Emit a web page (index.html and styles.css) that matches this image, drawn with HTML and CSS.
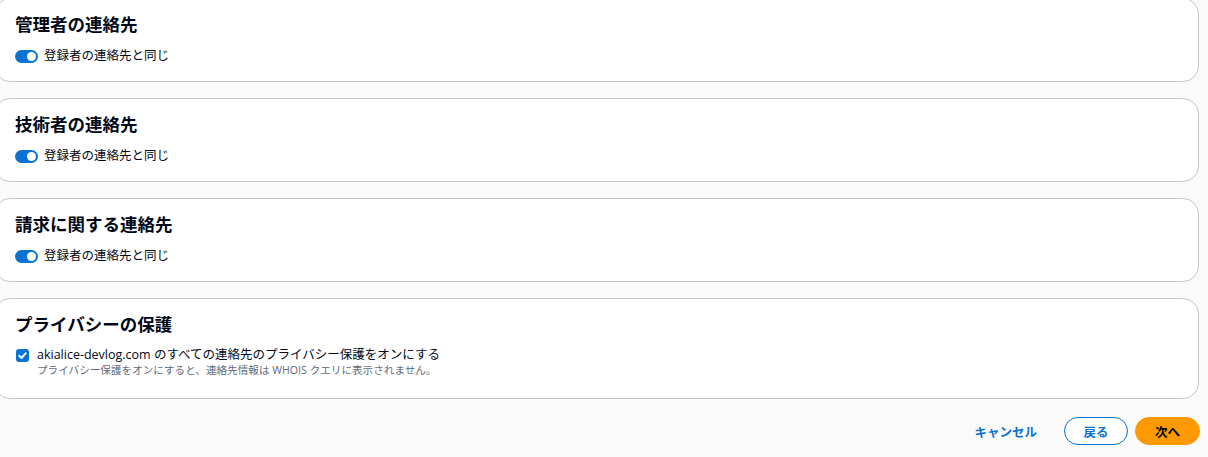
FILE: index.html
```html
<!DOCTYPE html>
<html lang="ja">
<head>
    <meta charset="UTF-8">
    <meta name="viewport" content="width=device-width, initial-scale=1.0">
    <title>連絡先</title>
    <link rel="stylesheet" href="styles.css">
</head>
<body>
    <div class="page">
        <div class="card">
            <h2 class="card-title">管理者の連絡先</h2>
            <label class="toggle-row">
                <span class="toggle"><span class="knob"></span></span>
                <span class="toggle-label">登録者の連絡先と同じ</span>
            </label>
        </div>

        <div class="card">
            <h2 class="card-title">技術者の連絡先</h2>
            <label class="toggle-row">
                <span class="toggle"><span class="knob"></span></span>
                <span class="toggle-label">登録者の連絡先と同じ</span>
            </label>
        </div>

        <div class="card">
            <h2 class="card-title">請求に関する連絡先</h2>
            <label class="toggle-row">
                <span class="toggle"><span class="knob"></span></span>
                <span class="toggle-label">登録者の連絡先と同じ</span>
            </label>
        </div>

        <div class="card card-privacy">
            <h2 class="card-title">プライバシーの保護</h2>
            <label class="check-row">
                <span class="checkbox">
                    <svg width="13" height="13" viewBox="0 0 13 13">
                        <path d="M3.2 6.8 L5.5 9 L9.8 4.2" fill="none" stroke="#fff" stroke-width="1.9" stroke-linecap="round" stroke-linejoin="round"/>
                    </svg>
                </span>
                <span class="check-text">
                    <span class="check-label">akialice-devlog.com のすべての連絡先のプライバシー保護をオンにする</span>
                    <span class="check-desc">プライバシー保護をオンにすると、連絡先情報は WHOIS クエリに表示されません。</span>
                </span>
            </label>
        </div>

        <div class="actions">
            <button class="link-button">キャンセル</button>
            <button class="normal-button">戻る</button>
            <button class="primary-button">次へ</button>
        </div>
    </div>
</body>
</html>
```

FILE: styles.css
```css
* {
    margin: 0;
    padding: 0;
    box-sizing: border-box;
}

body {
    font-family: "Open Sans", "Noto Sans CJK JP", sans-serif;
    background-color: #fafafa;
    color: #000716;
    overflow: hidden;
}

.page {
    margin: -2px 9px 0 -6px;
    display: flex;
    flex-direction: column;
    gap: 16px;
}

.card {
    background-color: #ffffff;
    border: 1px solid #c6c6cd;
    border-radius: 16px;
    padding: 14px 20px 16px;
}

.card-privacy {
    padding-bottom: 21px;
}

.card-title {
    font-size: 17.5px;
    font-weight: 700;
    line-height: 22px;
    margin-bottom: 12px;
}

.toggle-row {
    display: flex;
    align-items: center;
    gap: 6px;
    height: 18px;
}

.toggle {
    width: 23px;
    height: 13px;
    border-radius: 7px;
    background-color: #0972d3;
    display: flex;
    align-items: center;
    justify-content: flex-end;
    padding: 0 2px;
}

.knob {
    width: 9px;
    height: 9px;
    border-radius: 50%;
    background-color: #ffffff;
}

.toggle-label {
    font-size: 12.5px;
    line-height: 18px;
}

.check-row {
    display: flex;
    align-items: flex-start;
    gap: 8px;
    margin-left: 1px;
}

.checkbox {
    width: 13px;
    height: 13px;
    margin-top: 2px;
    border-radius: 3px;
    background-color: #0972d3;
    display: flex;
}

.check-text {
    display: flex;
    flex-direction: column;
}

.check-label {
    font-size: 12.5px;
    line-height: 16px;
}

.check-desc {
    font-size: 10.6px;
    line-height: 14px;
    color: #5f6b7a;
}

.actions {
    display: flex;
    justify-content: flex-end;
    align-items: center;
    gap: 7px;
    margin: 2px -1px 0 0;
}

.actions button {
    font-family: "Open Sans", "Noto Sans CJK JP", sans-serif;
    font-size: 12.5px;
    font-weight: 700;
    height: 28px;
    border-radius: 14px;
    cursor: pointer;
}

.link-button {
    background: transparent;
    border: none;
    color: #0972d3;
    padding: 0 20px;
}

.normal-button {
    background-color: #ffffff;
    border: 1px solid #0972d3;
    color: #0972d3;
    width: 64px;
}

.primary-button {
    background-color: #ff9900;
    border: 1px solid #ff9900;
    color: #000716;
    width: 65px;
}
```
